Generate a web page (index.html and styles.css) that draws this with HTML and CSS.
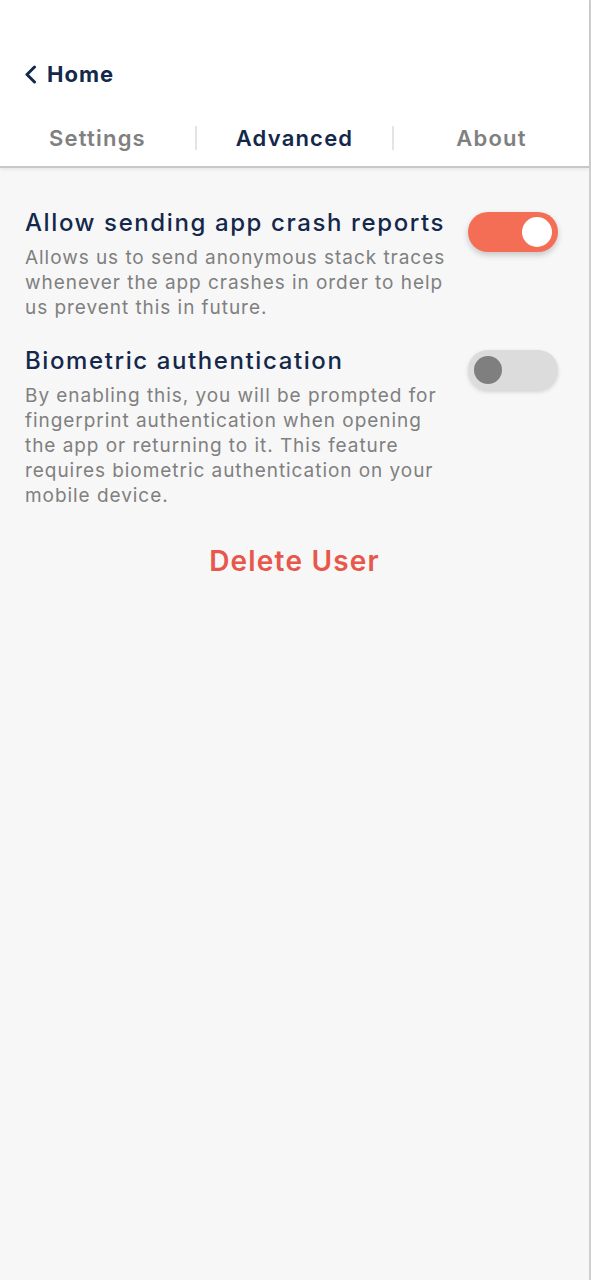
FILE: index.html
```html
<!DOCTYPE html>
<html lang="en">
<head>
  <meta charset="UTF-8">
  <meta name="viewport" content="width=device-width, initial-scale=1.0">
  <title>Advanced</title>
  <link rel="stylesheet" href="styles.css">
</head>
<body>

  <div class="app">
    <header class="topo">
      <a class="voltar" href="#">
        <svg width="13" height="19" viewBox="0 0 13 19">
          <path d="M10.5 2 L3 9.5 L10.5 17" fill="none" stroke="#14284b" stroke-width="3" stroke-linecap="round" stroke-linejoin="round"/>
        </svg>
        <span>Home</span>
      </a>

      <nav class="abas">
        <div class="aba">Settings</div>
        <div class="aba ativa">Advanced</div>
        <div class="aba">About</div>
      </nav>
    </header>

    <main class="conteudo">
      <div class="opcao">
        <div class="opcao-texto">
          <h2>Allow sending app crash reports</h2>
          <p>Allows us to send anonymous stack traces whenever the app crashes in order to help us prevent this in future.</p>
        </div>
        <div class="chave ligada"><span class="bolinha"></span></div>
      </div>

      <div class="opcao">
        <div class="opcao-texto">
          <h2>Biometric authentication</h2>
          <p>By enabling this, you will be prompted for fingerprint authentication when opening the app or returning to it. This feature requires biometric authentication on your mobile device.</p>
        </div>
        <div class="chave"><span class="bolinha"></span></div>
      </div>

      <button class="apagar">Delete User</button>
    </main>
  </div>

</body>
</html>
```

FILE: styles.css
```css
:root {
  --cor-texto: #14284b;
  --cor-cinza: #808080;
  --cor-fundo: #f7f7f7;
  --cor-laranja: #f46d55;
  --cor-apagar: #e8574b;
}

body {
  font-family: Inter, 'Open Sans', sans-serif;
  background-color: var(--cor-fundo);
  margin: 0;
  padding: 0;
}

.app {
  min-height: 100vh;
  border-right: 2px solid #cfcfcf;
  box-sizing: border-box;
  width: 591px;
}

.topo {
  background-color: #fff;
  border-bottom: 2px solid #c8c8c8;
  box-shadow: 0 2px 3px rgba(0,0,0,0.06);
  height: 168px;
  box-sizing: border-box;
}

.voltar {
  display: flex;
  align-items: center;
  gap: 10px;
  padding: 58px 0 0 24px;
  height: 32px;
  text-decoration: none;
  color: var(--cor-texto);
  font-weight: 700;
  font-size: 22px;
  letter-spacing: 1px;
}

.abas {
  display: flex;
  margin-top: 36px;
}

.aba {
  flex: 1;
  text-align: center;
  font-size: 22px;
  font-weight: 600;
  color: var(--cor-cinza);
  line-height: 24px;
  padding: 0;
  letter-spacing: 1.2px;
  border-left: 2px solid #e4e4e4;
}

.aba:first-child {
  border-left: none;
}

.aba.ativa {
  color: var(--cor-texto);
}

.conteudo {
  padding: 40px 25px 0 25px;
}

.opcao {
  display: flex;
  justify-content: space-between;
  align-items: flex-start;
  margin-bottom: 26px;
}

.opcao-texto {
  width: 425px;
}

.opcao h2 {
  margin: 0;
  font-size: 24px;
  font-weight: 500;
  color: var(--cor-texto);
  line-height: 30px;
  letter-spacing: 1.6px;
}

.opcao p {
  margin: 7px 0 0;
  font-size: 19px;
  line-height: 25px;
  color: var(--cor-cinza);
  letter-spacing: 0.95px;
}

.chave {
  width: 90px;
  height: 40px;
  border-radius: 20px;
  background-color: #dcdcdc;
  box-shadow: 0 2px 4px rgba(0,0,0,0.15);
  position: relative;
  flex-shrink: 0;
  margin-top: 4px;
  margin-right: 6px;
}

.bolinha {
  position: absolute;
  top: 6px;
  left: 6px;
  width: 28px;
  height: 28px;
  border-radius: 50%;
  background-color: #7f7f7f;
}

.chave.ligada {
  background-color: var(--cor-laranja);
  box-shadow: 0 3px 6px rgba(0,0,0,0.2);
}

.chave.ligada .bolinha {
  left: auto;
  right: 6px;
  top: 5px;
  width: 30px;
  height: 30px;
  background-color: #fff;
}

.apagar {
  display: block;
  margin: 35px auto 0;
  background: none;
  border: none;
  font-family: inherit;
  font-size: 28px;
  font-weight: 600;
  letter-spacing: 1.2px;
  color: var(--cor-apagar);
  cursor: pointer;
}
```
